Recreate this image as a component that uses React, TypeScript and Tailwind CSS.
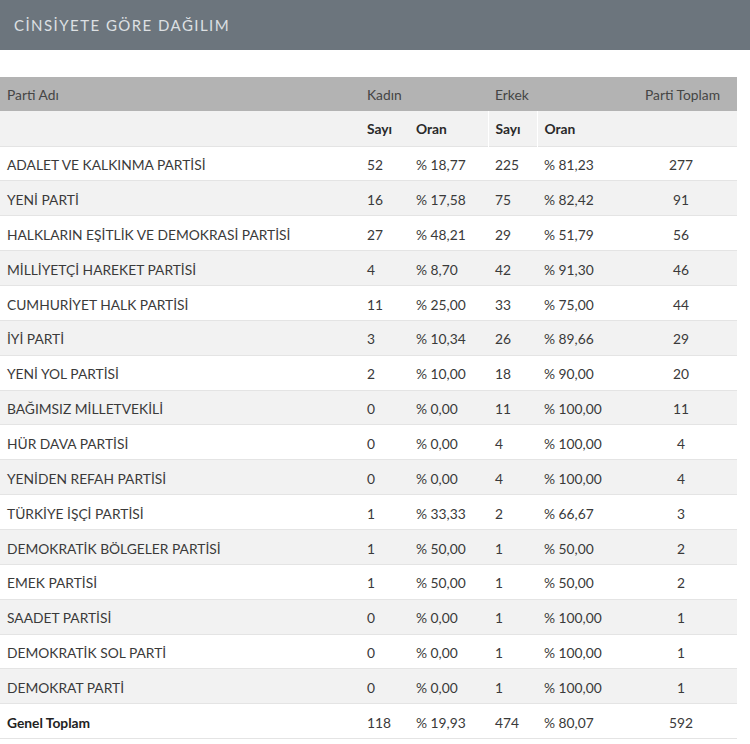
import React from "react";

type Row = [string, string, string, string, string, string];

const rows: Row[] = [
  ["ADALET VE KALKINMA PARTİSİ", "52", "% 18,77", "225", "% 81,23", "277"],
  ["YENİ PARTİ", "16", "% 17,58", "75", "% 82,42", "91"],
  ["HALKLARIN EŞİTLİK VE DEMOKRASİ PARTİSİ", "27", "% 48,21", "29", "% 51,79", "56"],
  ["MİLLİYETÇİ HAREKET PARTİSİ", "4", "% 8,70", "42", "% 91,30", "46"],
  ["CUMHURİYET HALK PARTİSİ", "11", "% 25,00", "33", "% 75,00", "44"],
  ["İYİ PARTİ", "3", "% 10,34", "26", "% 89,66", "29"],
  ["YENİ YOL PARTİSİ", "2", "% 10,00", "18", "% 90,00", "20"],
  ["BAĞIMSIZ MİLLETVEKİLİ", "0", "% 0,00", "11", "% 100,00", "11"],
  ["HÜR DAVA PARTİSİ", "0", "% 0,00", "4", "% 100,00", "4"],
  ["YENİDEN REFAH PARTİSİ", "0", "% 0,00", "4", "% 100,00", "4"],
  ["TÜRKİYE İŞÇİ PARTİSİ", "1", "% 33,33", "2", "% 66,67", "3"],
  ["DEMOKRATİK BÖLGELER PARTİSİ", "1", "% 50,00", "1", "% 50,00", "2"],
  ["EMEK PARTİSİ", "1", "% 50,00", "1", "% 50,00", "2"],
  ["SAADET PARTİSİ", "0", "% 0,00", "1", "% 100,00", "1"],
  ["DEMOKRATİK SOL PARTİ", "0", "% 0,00", "1", "% 100,00", "1"],
  ["DEMOKRAT PARTİ", "0", "% 0,00", "1", "% 100,00", "1"],
];

export default function App() {
  return (
    <div className="w-[750px] h-[744px] bg-white font-['Lato',sans-serif] text-[13.8px] text-[#3a3a3a] overflow-hidden">
      <div className="h-[50px] bg-[#6c757d] flex items-center px-[14px]">
        <h2 className="text-[15px] tracking-[1.45px] text-[#dde0e3] uppercase">
          CİNSİYETE GÖRE DAĞILIM
        </h2>
      </div>
      <div className="pt-[27px] pr-[13px]">
        <table className="w-[737px] table-fixed border-collapse">
          <colgroup>
            <col className="w-[360px]" />
            <col className="w-[49px]" />
            <col className="w-[79px]" />
            <col className="w-[49px]" />
            <col className="w-[88px]" />
            <col className="w-[112px]" />
          </colgroup>
          <thead>
            <tr className="h-[34px] bg-[#b3b3b3] text-[#454545]">
              <th className="text-left font-normal px-[7px] pt-[2px]">Parti Adı</th>
              <th colSpan={2} className="text-left font-normal px-[7px] pt-[2px]">Kadın</th>
              <th colSpan={2} className="text-left font-normal px-[7px] pt-[2px]">Erkek</th>
              <th className="text-right font-normal pr-[17px] pt-[2px]">Parti Toplam</th>
            </tr>
            <tr className="h-[35px] bg-[#f2f2f2] border-b border-[#e4e4e4] text-[#2a2a2a]">
              <th></th>
              <th className="text-left font-bold px-[7px] pt-[3px]">Sayı</th>
              <th className="text-left font-bold px-[7px] pt-[3px]">Oran</th>
              <th className="text-left font-bold px-[7px] pt-[3px] border-l border-white">Sayı</th>
              <th className="text-left font-bold px-[7px] pt-[3px] border-l border-white">Oran</th>
              <th></th>
            </tr>
          </thead>
          <tbody>
            {rows.map((r, i) => (
              <tr
                key={r[0]}
                className={`h-[34.87px] border-b border-[#e4e4e4] ${i % 2 === 1 ? "bg-[#f2f2f2]" : "bg-white"}`}
              >
                <td className="px-[7px] pt-[4px] whitespace-nowrap">{r[0]}</td>
                <td className="px-[7px] pt-[4px]">{r[1]}</td>
                <td className="px-[7px] pt-[4px] whitespace-nowrap">{r[2]}</td>
                <td className="px-[7px] pt-[4px]">{r[3]}</td>
                <td className="px-[7px] pt-[4px] whitespace-nowrap">{r[4]}</td>
                <td className="text-center pt-[4px]">{r[5]}</td>
              </tr>
            ))}
            <tr className="h-[34.87px] border-b border-[#e4e4e4] bg-white">
              <td className="px-[7px] pt-[4px] font-bold text-[#222]">Genel Toplam</td>
              <td className="px-[7px] pt-[4px]">118</td>
              <td className="px-[7px] pt-[4px] whitespace-nowrap">% 19,93</td>
              <td className="px-[7px] pt-[4px]">474</td>
              <td className="px-[7px] pt-[4px] whitespace-nowrap">% 80,07</td>
              <td className="text-center pt-[4px]">592</td>
            </tr>
          </tbody>
        </table>
      </div>
    </div>
  );
}
